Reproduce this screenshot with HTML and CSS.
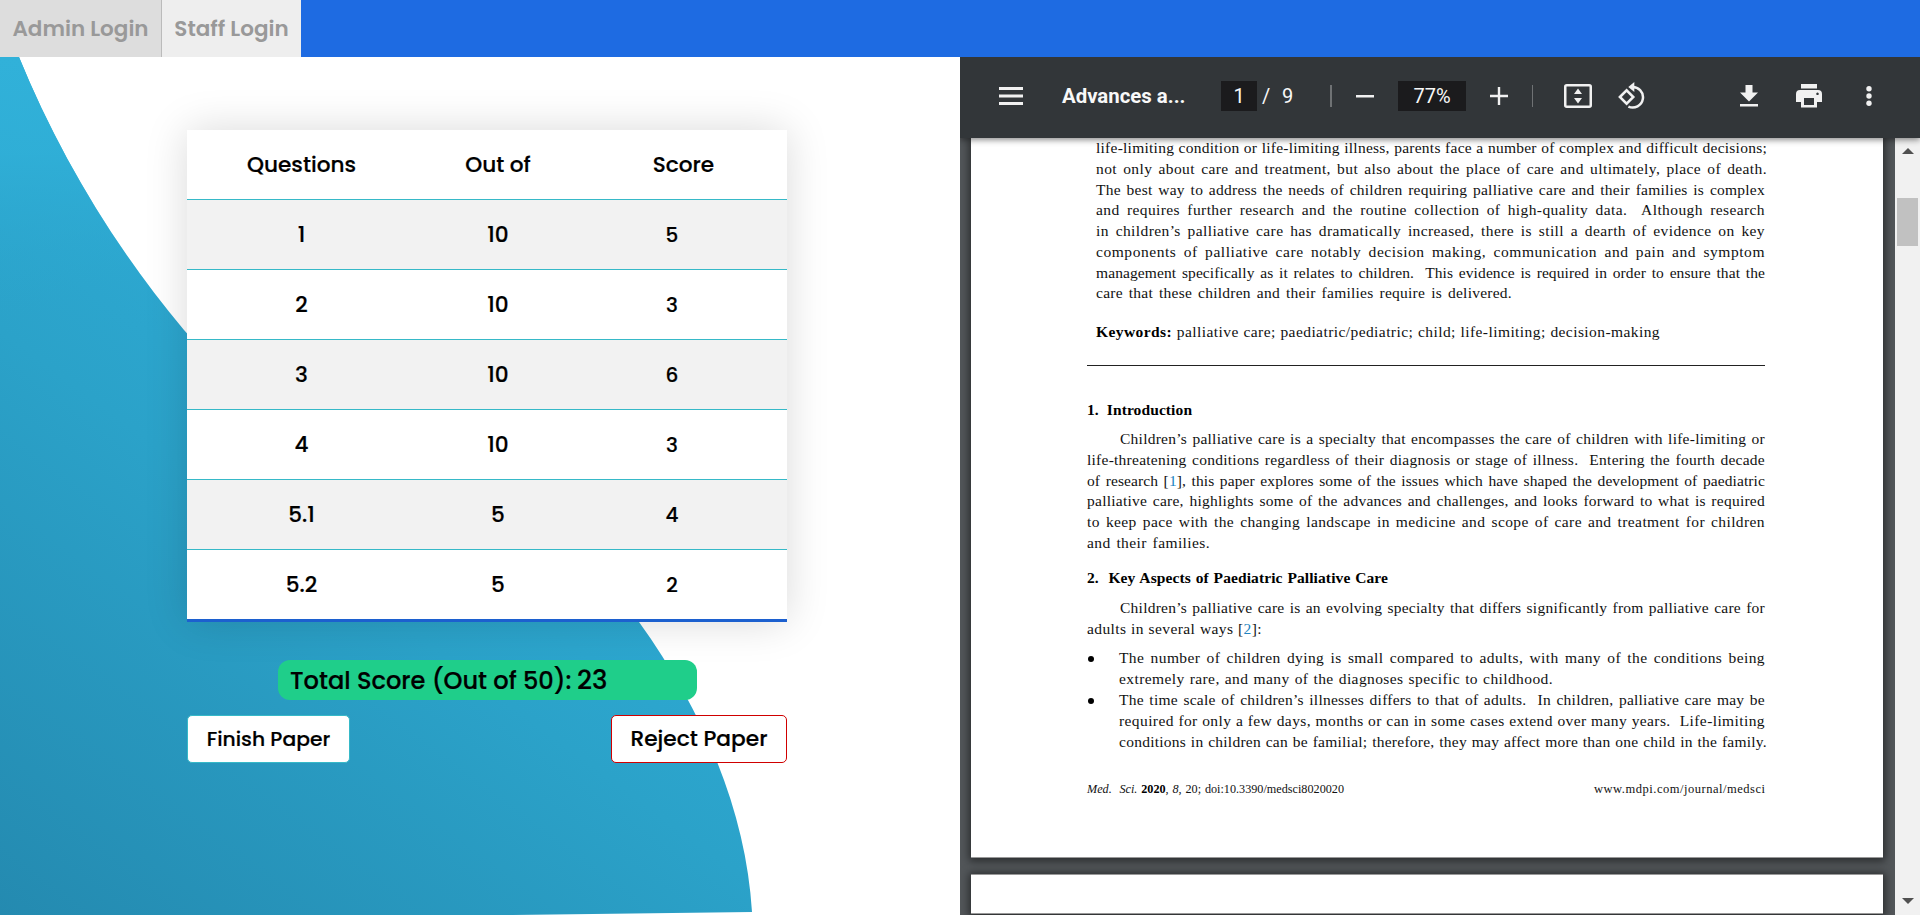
FILE: index.html
```html
<!DOCTYPE html>
<html lang="en">
<head>
<meta charset="utf-8">
<title>Paper Marking</title>
<link rel="stylesheet" href="styles.css">
</head>
<body>
<nav class="navbar">
  <a class="nav-link admin">Admin Login</a>
  <a class="nav-link staff">Staff Login</a>
</nav>
<div class="split">
  <main class="marking">
    <svg class="wave" viewBox="0 57 960 858" aria-hidden="true">
      <defs>
        <linearGradient id="sea" gradientUnits="userSpaceOnUse" x1="0" y1="915" x2="430" y2="330">
          <stop offset="0" stop-color="#248ab0"/><stop offset=".65" stop-color="#2ba2c9"/><stop offset="1" stop-color="#2eabd5"/>
        </linearGradient>
        <linearGradient id="glow" gradientUnits="userSpaceOnUse" x1="0" y1="57" x2="0" y2="330">
          <stop offset="0" stop-color="#31b1d9"/><stop offset=".35" stop-color="#30b0d8" stop-opacity=".8"/><stop offset="1" stop-color="#2ba3ca" stop-opacity="0"/>
        </linearGradient>
      </defs>
      <path fill="url(#sea)" d="M0 57H19C58 153 115 248 184 330C300 465 520 465 639 622C704 712 746 812 752 912L513 915H0Z"/>
      <path fill="url(#glow)" d="M0 57H19C58 153 115 248 184 330H0Z"/>
    </svg>
    <div class="panel">
      <table class="scores">
        <thead><tr><th class="c1">Questions</th><th class="c2">Out of</th><th class="c3">Score</th></tr></thead>
        <tbody>
          <tr><td>1</td><td>10</td><td class="mark">5</td></tr>
          <tr><td>2</td><td>10</td><td class="mark">3</td></tr>
          <tr><td>3</td><td>10</td><td class="mark">6</td></tr>
          <tr><td>4</td><td>10</td><td class="mark">3</td></tr>
          <tr><td>5.1</td><td>5</td><td class="mark">4</td></tr>
          <tr><td>5.2</td><td>5</td><td class="mark">2</td></tr>
        </tbody>
      </table>
      <div class="total"><span class="total-label">Total Score (Out of 50):</span><span class="total-value">23</span></div>
      <div class="actions">
        <button class="btn finish">Finish Paper</button>
        <button class="btn reject">Reject Paper</button>
      </div>
    </div>
  </main>
  <section class="viewer">
    <header class="toolbar">
      <svg class="i-menu" width="24" height="18"><path fill="#f1f1f1" d="M0 0h24v3H0zM0 7.5h24v3H0zM0 15h24v3H0z"/></svg>
      <span class="doc-title">Advances a...</span>
      <span class="field page-no">1</span>
      <span class="slash">/</span><span class="pages">9</span>
      <i class="divider d1"></i>
      <svg class="i-minus" width="18" height="3"><path fill="#f1f1f1" d="M0 0h18v2.5H0z"/></svg>
      <span class="field zoom">77%</span>
      <svg class="i-plus" width="18" height="18"><path fill="#f1f1f1" d="M7.8 0h2.4v7.8H18v2.4h-7.8V18H7.8v-7.8H0V7.800h7.800z"/></svg>
      <i class="divider d2"></i>
      <svg class="i-fit" width="28" height="24" fill="none"><rect x="1.25" y="1.25" width="25.500" height="21.500" rx="1.500" stroke="#f1f1f1" stroke-width="2.500"/><path fill="#f1f1f1" d="M14 4.500l4 5.500h-8zM14 19.500l4-5.500h-8z"/></svg>
      <svg class="i-rotate" width="28" height="28" fill="none" stroke="#f1f1f1" stroke-width="2.500"><path d="M1.900 15l6.700-6.700 6.700 6.700-6.700 6.700z"/><path d="M13.500 5A10.300 10.300 0 1 1 10.400 24.600"/><path fill="#f1f1f1" stroke="none" d="M16.300 0v10L10.300 5z"/></svg>
      <svg class="i-download" width="18" height="22"><path fill="#f1f1f1" d="M5.500 0h7v7.500H18l-9 9-9-9h5.500zM0 19h18v2.600H0z"/></svg>
      <svg class="i-print" width="26" height="24"><path fill="#f1f1f1" d="M5 0h16v4.500H5z"/><path fill="#f1f1f1" fill-rule="evenodd" d="M4 6h18a4 4 0 0 1 4 4v8h-5v5.500H5V18H0v-8a4 4 0 0 1 4-4zM8 14v7h10v-7zM21.500 8.500a1.300 1.300 0 1 0 .01 0z"/></svg>
      <svg class="i-more" width="6" height="20" fill="#f1f1f1"><circle cx="3" cy="2.700" r="2.700"/><circle cx="3" cy="10" r="2.700"/><circle cx="3" cy="17.300" r="2.700"/></svg>
    </header>
    <div class="canvas">
      <div class="sheets">
        <article class="sheet">
          <div class="abstract">
            <p class="ln over">life-limiting condition or life-limiting illness, parents face a number of complex and difficult decisions;</p>
            <p class="ln over loose">not only about care and treatment, but also about the place of care and ultimately, place of death.</p>
            <p class="ln">The best way to address the needs of children requiring palliative care and their families is complex</p>
            <p class="ln loose">and requires further research and the routine collection of high-quality data.&nbsp; Although research</p>
            <p class="ln loose">in children’s palliative care has dramatically increased, there is still a dearth of evidence on key</p>
            <p class="ln looser">components of palliative care notably decision making, communication and pain and symptom</p>
            <p class="ln tight">management specifically as it relates to children.&nbsp; This evidence is required in order to ensure that the</p>
            <p class="ln w-care">care that these children and their families require is delivered.</p>
            <p class="ln w-key"><b>Keywords:</b> palliative care; paediatric/pediatric; child; life-limiting; decision-making</p>
          </div>
          <hr class="rule">
          <h2 class="ln w-h1">1.&nbsp; Introduction</h2>
          <div class="para">
            <p class="ln indent">Children’s palliative care is a specialty that encompasses the care of children with life-limiting or</p>
            <p class="ln">life-threatening conditions regardless of their diagnosis or stage of illness.&nbsp; Entering the fourth decade</p>
            <p class="ln tight">of research [<a>1</a>], this paper explores some of the issues which have shaped the development of paediatric</p>
            <p class="ln">palliative care, highlights some of the advances and challenges, and looks forward to what is required</p>
            <p class="ln loose">to keep pace with the changing landscape in medicine and scope of care and treatment for children</p>
            <p class="ln w-fam loose">and their families.</p>
          </div>
          <h2 class="ln w-h2">2.&nbsp; Key Aspects of Paediatric Palliative Care</h2>
          <div class="para second">
            <p class="ln indent">Children’s palliative care is an evolving specialty that differs significantly from palliative care for</p>
            <p class="ln w-adults loose">adults in several ways [<a>2</a>]:</p>
          </div>
          <ul class="points">
            <li><p class="ln loose">The number of children dying is small compared to adults, with many of the conditions being</p>
              <p class="ln w-rare loose">extremely rare, and many of the diagnoses specific to childhood.</p></li>
            <li><p class="ln">The time scale of children’s illnesses differs to that of adults.&nbsp; In children, palliative care may be</p>
              <p class="ln loose">required for only a few days, months or can in some cases extend over many years.&nbsp; Life-limiting</p>
              <p class="ln over">conditions in children can be familial; therefore, they may affect more than one child in the family.</p></li>
          </ul>
          <footer class="foot"><p class="ln w-doi"><em>Med.&nbsp; Sci.</em> <b>2020</b>, <em>8</em>, 20; doi:10.3390/medsci8020020</p><p class="ln w-url">www.mdpi.com/journal/medsci</p></footer>
        </article>
        <article class="sheet next"></article>
      </div>
      <div class="scrollbar">
        <svg width="12" height="6"><path fill="#505050" d="M6 0l6 6H0z"/></svg>
        <div class="thumb"></div>
        <svg class="down" width="12" height="6"><path fill="#505050" d="M0 0h12L6 6z"/></svg>
      </div>
    </div>
  </section>
</div>
</body>
</html>
```
FILE: styles.css
```css
* { box-sizing: border-box; }
body { margin: 0; height: 915px; overflow: hidden; background: #fff; color: #000; font-family: Poppins, Inter, sans-serif; }
p, h2, ul { margin: 0; padding: 0; }

.navbar { display: flex; height: 57px; background: #1e6be2; }
.nav-link { display: flex; align-items: center; justify-content: center; color: #999; font-size: 21.500px; font-weight: 600; white-space: nowrap; }
.admin { width: 162px; background: #ddd; border-right: 1px solid #bbb; }
.staff { width: 139px; background: #eee; }

.split { display: flex; height: 858px; }
.marking { position: relative; width: 960px; }
.wave { position: absolute; left: 0; top: 0; width: 960px; height: 858px; }
.panel { position: relative; width: 600px; margin: 73px 0 0 187px; }
.scores { width: 600px; table-layout: fixed; border-collapse: separate; border-spacing: 0; background: #fff; border-bottom: 3px solid #1c60cf; box-shadow: 0 0 40px rgba(0,0,0,.15); font-size: 21.600px; }
.scores th, .scores td { height: 70px; padding: 0; text-align: center; font-weight: 500; border-bottom: 1px solid #36b9c8; -webkit-text-stroke: .2px #000; }
.scores tbody tr:last-child td { height: 69px; border-bottom: 0; }
.scores tbody tr:nth-child(odd) { background: #f2f2f2; }
.c1 { width: 229px; }
.c2 { width: 164px; }
.scores .mark { padding-right: 23px; font-size: 20px; }
.total { display: flex; align-items: center; gap: 5px; width: 419px; height: 40px; margin: 38px 0 0 91px; padding-left: 12px; border-radius: 12px; background: #1fce8a; font-weight: 500; white-space: nowrap; -webkit-text-stroke: .2px #000; }
.total-label { width: 282px; font-size: 24.100px; }
.total-value { font-size: 26px; }
.actions { display: flex; justify-content: space-between; margin-top: 15px; }
.btn { height: 48px; padding: 0 0 1px; border-radius: 5px; background: #fff; color: #000; font-family: inherit; font-weight: 500; white-space: nowrap; -webkit-text-stroke: .2px #000; }
.finish { width: 163px; border: 1px solid #36b9c8; font-size: 20.300px; }
.reject { width: 176px; border: 1px solid #d00000; font-size: 21.700px; }

.viewer { display: flex; flex-direction: column; width: 960px; background: #525659; }
.toolbar { position: relative; z-index: 1; display: flex; align-items: center; height: 81px; padding-left: 39px; background: #323639; box-shadow: 0 2px 6px rgba(0,0,0,.45); clip-path: inset(0 0 -10px 0); color: #f8f8f8; font-family: Roboto, sans-serif; font-size: 20px; }
.toolbar > * { flex: none; margin-top: -3px; }
.doc-title { width: 124px; margin-left: 39px; font-weight: 700; font-size: 20.400px; white-space: nowrap; }
.field { height: 30px; line-height: 30px; background: #1b1b1d; text-align: center; }
.page-no { width: 36px; margin-left: 35px; }
.slash { width: 10px; margin-left: 5px; }
.pages { width: 12px; margin-left: 10px; }
.divider { height: 22px; background: #6f7274; }
.d1 { width: 2px; margin-left: 36px; }
.i-minus { margin-left: 24px; }
.zoom { width: 68px; margin-left: 24px; }
.i-plus { margin-left: 24px; }
.d2 { width: 1px; margin-left: 24px; }
.i-fit { margin-left: 31px; }
.i-rotate { margin-left: 26px; }
.i-download { margin-left: 94px; }
.i-print { margin-left: 38px; }
.i-more { margin-left: 44px; }

.canvas { display: flex; height: 777px; }
.sheets { width: 935px; padding-left: 11px; overflow: hidden; }
.sheet { width: 912px; height: 720px; padding: 0 118px 0 116px; background: #fff; border-bottom: 1px solid #999; box-shadow: 0 1px 8px 2px rgba(0,0,0,.5); color: #111; font-family: "Palatino Linotype", Palatino, "Liberation Serif", serif; font-size: 15.500px; line-height: 20.750px; }
.next { height: 40px; margin-top: 16px; border-top: 1px solid #999; }
.ln { white-space: nowrap; text-align: justify; text-align-last: justify; letter-spacing: .25px; }
.tight { letter-spacing: .1px; }
.loose { letter-spacing: .4px; }
.looser { letter-spacing: .55px; }
.sheet b, .sheet h2 { color: #000; font-weight: 700; }
.sheet h2 { font-size: 15.500px; line-height: 20.800px; letter-spacing: .1px; }
.sheet a { color: #2083c0; }
.abstract { padding-left: 9px; }
.abstract .over, .points .over { margin-right: -2px; }
.w-care { width: 416px; }
.w-key { width: 564px; margin-top: 18px; letter-spacing: .42px; }
.rule { height: 1px; margin: 22px 0 34px; border: 0; background: #222; }
.w-h1 { width: 104px; }
.para { margin-top: 8.500px; }
.second { margin-top: 9.500px; }
.indent { padding-left: 33px; }
.w-fam { width: 123px; }
.w-h2 { width: 301px; margin-top: 14px; }
.w-adults { width: 175px; }
.points { margin: 8.500px 0 0; padding-left: 32px; list-style: none; }
.points li { position: relative; }
.points li + li { margin-top: 1px; }
.points li::before { content: ""; position: absolute; left: -31px; top: 8px; width: 6px; height: 6px; border-radius: 50%; background: #000; }
.w-rare { width: 434px; }
.foot { display: flex; justify-content: space-between; margin-top: 26px; font-size: 12.500px; }
.w-doi { width: 257px; font-size: 12.200px; letter-spacing: 0; }
.w-url { width: 171px; letter-spacing: .52px; }
.scrollbar { display: flex; flex-direction: column; align-items: center; width: 25px; padding-top: 10px; background: #f1f1f1; }
.thumb { width: 21px; height: 48px; margin-top: 44px; background: #c1c1c1; }
.down { margin-top: 652px; }
```
